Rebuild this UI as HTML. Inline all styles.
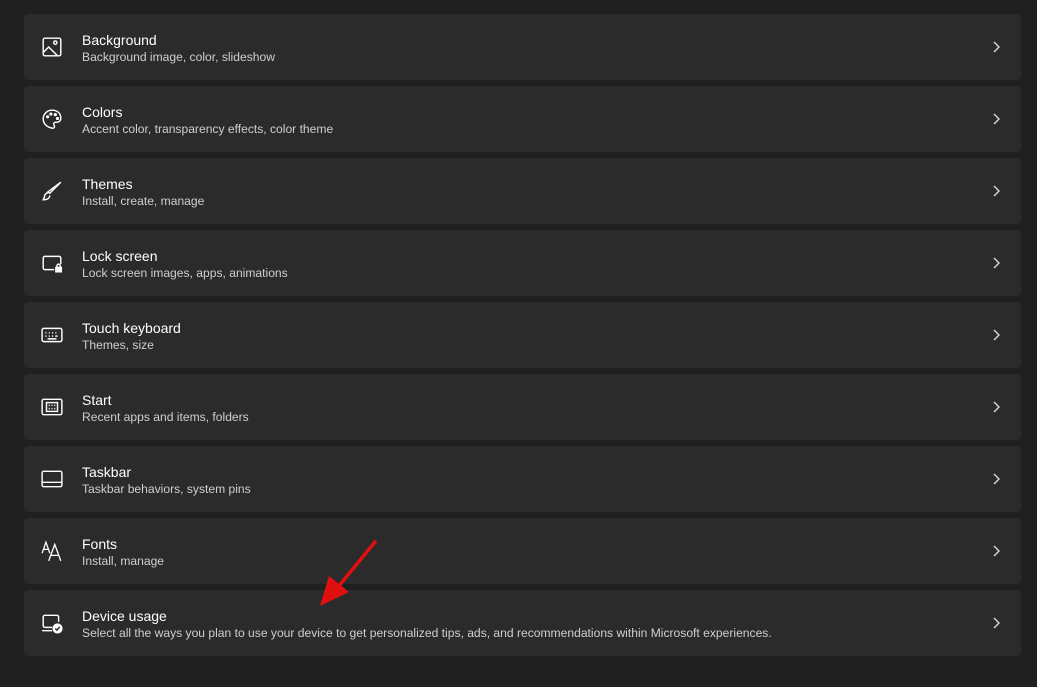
<!DOCTYPE html>
<html><head><style>
html,body{margin:0;padding:0;background:#202020;width:1037px;height:687px;overflow:hidden;font-family:"Liberation Sans",sans-serif}
.card{position:absolute;left:24px;width:997px;height:66px;background:#2b2b2b;border-radius:4px}
.ic{position:absolute;left:17px;top:22px;width:22px;height:22px}
.t{position:absolute;left:58px;top:18px;font-size:14px;color:#fff}
.s{position:absolute;left:58px;top:36px;font-size:12.1px;color:#cfcfcf}
.ch{position:absolute;right:20px;top:27px}
</style></head><body>
<div class="card" style="top:14px"><svg class="ic" viewBox="0 0 20 20" fill="none" stroke="#fff" stroke-width="1.3"><rect x="2" y="2" width="16" height="16" rx="1.5"/><path d="M2 15l5-5 8 8"/><circle cx="13" cy="6" r="1.5"/></svg><div class="t">Background</div><div class="s">Background image, color, slideshow</div><svg class="ch" width="10" height="12" viewBox="0 0 10 12"><path d="M3 1l5 5-5 5" stroke="#ddd" stroke-width="1.4" fill="none"/></svg></div>
<div class="card" style="top:86px"><svg class="ic" viewBox="0 0 20 20" fill="none" stroke="#fff" stroke-width="1.3"><path d="M10 2c5 0 8 3 8 7 0 4-3 4-5 4-1 0-2 1-1 3 1 2-1 3-3 2C4 17 2 13 2 10 2 5 6 2 10 2z"/><circle cx="6" cy="8" r=".8"/><circle cx="9" cy="5.5" r=".8"/><circle cx="13" cy="6" r=".8"/><circle cx="15" cy="9.5" r=".8"/></svg><div class="t">Colors</div><div class="s">Accent color, transparency effects, color theme</div><svg class="ch" width="10" height="12" viewBox="0 0 10 12"><path d="M3 1l5 5-5 5" stroke="#ddd" stroke-width="1.4" fill="none"/></svg></div>
<div class="card" style="top:158px"><svg class="ic" viewBox="0 0 20 20" fill="none" stroke="#fff" stroke-width="1.3"><path d="M18 2L8 12l-2-1zM6 12c-2 0-3 2-3 4l-1 2c3 0 6-1 6-4"/></svg><div class="t">Themes</div><div class="s">Install, create, manage</div><svg class="ch" width="10" height="12" viewBox="0 0 10 12"><path d="M3 1l5 5-5 5" stroke="#ddd" stroke-width="1.4" fill="none"/></svg></div>
<div class="card" style="top:230px"><svg class="ic" viewBox="0 0 20 20" fill="none" stroke="#fff" stroke-width="1.3"><path d="M12 16H3.5A1.5 1.5 0 0 1 2 14.5v-9A1.5 1.5 0 0 1 3.5 4h13A1.5 1.5 0 0 1 18 5.5V11"/><rect x="13.5" y="14" width="5" height="4" fill="#fff"/><path d="M14.5 14v-1.5a1.5 1.5 0 0 1 3 0V14"/></svg><div class="t">Lock screen</div><div class="s">Lock screen images, apps, animations</div><svg class="ch" width="10" height="12" viewBox="0 0 10 12"><path d="M3 1l5 5-5 5" stroke="#ddd" stroke-width="1.4" fill="none"/></svg></div>
<div class="card" style="top:302px"><svg class="ic" viewBox="0 0 20 20" fill="none" stroke="#fff" stroke-width="1.3"><rect x="1" y="4" width="18" height="12" rx="1.5"/><path d="M4 8h1M7 8h1M10 8h1M13 8h1M16 8h0M4 11h1M7 11h1M10 11h1M13 11h2M6 13.5h8"/></svg><div class="t">Touch keyboard</div><div class="s">Themes, size</div><svg class="ch" width="10" height="12" viewBox="0 0 10 12"><path d="M3 1l5 5-5 5" stroke="#ddd" stroke-width="1.4" fill="none"/></svg></div>
<div class="card" style="top:374px"><svg class="ic" viewBox="0 0 20 20" fill="none" stroke="#fff" stroke-width="1.3"><rect x="1" y="3" width="18" height="14" rx="1.5"/><rect x="5" y="6" width="10" height="8"/><path d="M7 8.5h1M9.5 8.5h1M12 8.5h1M7 11.5h1M9.5 11.5h1M12 11.5h1"/></svg><div class="t">Start</div><div class="s">Recent apps and items, folders</div><svg class="ch" width="10" height="12" viewBox="0 0 10 12"><path d="M3 1l5 5-5 5" stroke="#ddd" stroke-width="1.4" fill="none"/></svg></div>
<div class="card" style="top:446px"><svg class="ic" viewBox="0 0 20 20" fill="none" stroke="#fff" stroke-width="1.3"><rect x="1" y="3" width="18" height="14" rx="1.5"/><path d="M1 13h18"/></svg><div class="t">Taskbar</div><div class="s">Taskbar behaviors, system pins</div><svg class="ch" width="10" height="12" viewBox="0 0 10 12"><path d="M3 1l5 5-5 5" stroke="#ddd" stroke-width="1.4" fill="none"/></svg></div>
<div class="card" style="top:518px"><svg class="ic" viewBox="0 0 20 20" fill="none" stroke="#fff" stroke-width="1.2"><path d="M1 12L4.5 2 8 12M2.2 8.5h4.6M7 19l5.5-15 5.5 15M8.8 14h7.4"/></svg><div class="t">Fonts</div><div class="s">Install, manage</div><svg class="ch" width="10" height="12" viewBox="0 0 10 12"><path d="M3 1l5 5-5 5" stroke="#ddd" stroke-width="1.4" fill="none"/></svg></div>
<div class="card" style="top:590px"><svg class="ic" viewBox="0 0 20 20" fill="none" stroke="#fff" stroke-width="1.3"><path d="M10 14H3.5A1.5 1.5 0 0 1 2 12.5v-8A1.5 1.5 0 0 1 3.5 3h11A1.5 1.5 0 0 1 16 4.5V9M1 17h9"/><circle cx="15" cy="15" r="4" fill="#fff"/><path d="M13 15l1.5 1.5 2.5-3" stroke="#2b2b2b"/></svg><div class="t">Device usage</div><div class="s">Select all the ways you plan to use your device to get personalized tips, ads, and recommendations within Microsoft experiences.</div><svg class="ch" width="10" height="12" viewBox="0 0 10 12"><path d="M3 1l5 5-5 5" stroke="#ddd" stroke-width="1.4" fill="none"/></svg></div>
<svg style="position:absolute;left:0;top:0" width="1037" height="687"><path d="M375 542L338 587" stroke="#e01010" stroke-width="3.5" stroke-linecap="round"/><path d="M320 606L329 576L349 592Z" fill="#e01010"/></svg>
</body></html>
